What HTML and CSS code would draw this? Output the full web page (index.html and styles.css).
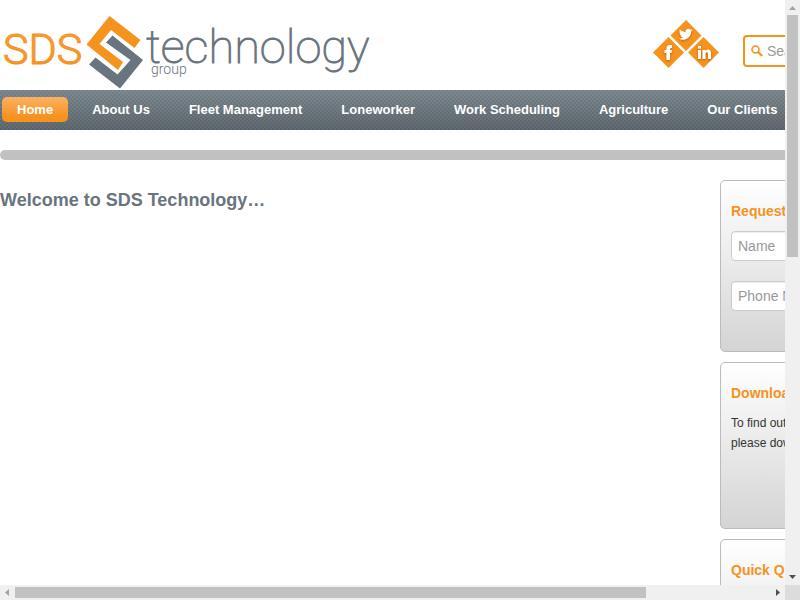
FILE: index.html
```html
<!DOCTYPE html>
<html lang="en">
<head>
<meta charset="utf-8">
<title>SDS Technology</title>
<link rel="stylesheet" href="styles.css">
</head>
<body>
<div class="view">
  <div class="page">
    <header class="header">
      <a class="logo" href="#">
        <svg class="logo-art" viewBox="0 0 380 90" role="img" aria-label="SDS technology group">
          <defs>
            <linearGradient id="sds" x1="0" y1="0" x2="0" y2="1">
              <stop offset="0" stop-color="#f9a23b"/>
              <stop offset="1" stop-color="#f6921e"/>
            </linearGradient>
          </defs>
          <text class="logo-sds" x="3" y="64" fill="url(#sds)">SDS</text>
          <path fill="#f6921e" d="M109.500 16 L140.500 40 L134.500 48 L111 30 L99.500 44 L123 62 L118 70 L86.500 44.500Z"/>
          <path fill="#6a747e" d="M112.500 35.500 L143 60 L120 88.500 L89 64.500 L95.500 57.500 L117.500 74.500 L130.500 60 L106 42.500Z"/>
          <text class="logo-tech" x="146" y="63">technology</text>
          <text class="logo-group" x="151" y="74">group</text>
        </svg>
      </a>
      <div class="social">
        <svg viewBox="0 0 66 50" width="66" height="50" role="img" aria-label="Social links">
          <defs>
            <filter id="shade" x="-30%" y="-30%" width="160%" height="170%">
              <feDropShadow dx="0" dy="1" stdDeviation="1" flood-color="#7a4300" flood-opacity=".6"/>
            </filter>
          </defs>
          <g fill="#f6921e">
            <path d="M33 0 L48.500 15.500 L33 31 L17.500 15.500Z"/>
            <path d="M15.500 17 L31 32.500 L15.500 48 L0 32.500Z"/>
            <path d="M50.500 17 L66 32.500 L50.500 48 L35 32.500Z"/>
          </g>
          <g fill="#fff" filter="url(#shade)">
            <path transform="translate(26 7.500) scale(.56)" d="M23.950 4.570a10 10 0 0 1-2.820.770 4.960 4.960 0 0 0 2.160-2.720c-.950.550-2 .950-3.130 1.180a4.920 4.920 0 0 0-8.380 4.480C7.690 8.090 4.070 6.130 1.640 3.160a4.930 4.930 0 0 0 1.520 6.570 4.900 4.900 0 0 1-2.230-.610v.060a4.920 4.920 0 0 0 3.950 4.830 5 5 0 0 1-2.210.080 4.940 4.940 0 0 0 4.600 3.420A9.870 9.870 0 0 1 0 19.540a14 14 0 0 0 7.550 2.210c9.050 0 14-7.500 14-13.990 0-.210 0-.420-.020-.630a9.940 9.940 0 0 0 2.420-2.560z"/>
            <path d="M13.500 40 V33 H11.500 V30 H13.500 V28.500 Q13.500 25 17 25 H19 V28 H18 Q17 28 17 29 V30 H19 L18.500 33 H17 V40Z"/>
            <path d="M45 30 H48 V39 H45Z M45 26 H48 V28.500 H45Z M49.500 30 H52.500 V31 Q53.500 29.500 55 29.500 Q58 29.500 58 33 V39 H55 V34 Q55 32 54 32 Q52.500 32 52.500 34 V39 H49.500Z"/>
          </g>
        </svg>
      </div>
      <form class="search">
        <svg class="search-icon" viewBox="0 0 12 12" width="12" height="12" aria-hidden="true">
          <circle cx="4.500" cy="4.500" r="3.500" fill="none" stroke="#f6921e" stroke-width="1.600"/>
          <path d="M7.500 7.500 L10.500 10.200" stroke="#f6921e" stroke-width="2.200" stroke-linecap="round"/>
        </svg>
        <input type="text" placeholder="Search" aria-label="Search">
      </form>
    </header>
    <nav class="nav">
      <a class="current" href="#">Home</a>
      <a href="#">About Us</a>
      <a href="#">Fleet Management</a>
      <a href="#">Loneworker</a>
      <a href="#">Work Scheduling</a>
      <a href="#">Agriculture</a>
      <a href="#">Our Clients</a>
    </nav>
    <div class="banner"></div>
    <div class="columns">
      <main class="main"><h1>Welcome to SDS Technology…</h1></main>
      <aside class="side">
        <form class="card request">
          <h2>Request</h2>
          <input type="text" placeholder="Name" aria-label="Name">
          <input type="text" placeholder="Phone Number" aria-label="Phone Number">
        </form>
        <section class="card download">
          <h2>Download</h2>
          <p>To find out<br>please download</p>
        </section>
        <section class="card"><h2>Quick Quote</h2></section>
      </aside>
    </div>
  </div>
</div>
<div class="bar bar-y" aria-hidden="true">
  <svg viewBox="0 0 15 15"><path fill="#a3a3a3" d="M4 10 L7.500 6 L11 10Z"/></svg>
  <div class="track"><div class="thumb"></div></div>
  <svg viewBox="0 0 15 15"><path fill="#505050" d="M4 5 L7.500 9 L11 5Z"/></svg>
</div>
<div class="bar bar-x" aria-hidden="true">
  <svg viewBox="0 0 15 15"><path fill="#a3a3a3" d="M9 4 L5 7.500 L9 11Z"/></svg>
  <div class="track"><div class="thumb"></div></div>
  <svg viewBox="0 0 15 15"><path fill="#505050" d="M6 4 L10 7.500 L6 11Z"/></svg>
</div>
<div class="corner"></div>
</body>
</html>
```
FILE: styles.css
```css
* { box-sizing: border-box; }

body {
  margin: 0;
  height: 100vh;
  display: grid;
  grid-template: minmax(0, 1fr) 15px / minmax(0, 1fr) 15px;
  overflow: hidden;
  background: #fff;
  color: #333;
  font: 12px/20px "Liberation Sans", Arial, sans-serif;
}

.view { overflow: hidden; }
.page { min-width: 940px; }

.header {
  display: flex;
  align-items: flex-start;
  height: 90px;
}
.logo { flex: 0 0 653px; }
.logo-art { display: block; width: 380px; height: 90px; }
.logo-sds { font: 300 43px Roboto, sans-serif; stroke: #f6921e; stroke-width: 1px; }
.logo-tech { font: 100 47px Roboto, sans-serif; fill: #6a747e; stroke: #6a747e; stroke-width: 1px; }
.logo-group { font: 300 14px Roboto, sans-serif; fill: #6a747e; }
.social { padding-top: 20px; width: 90px; }

.search {
  display: flex;
  align-items: center;
  gap: 4px;
  flex: 1;
  height: 32px;
  margin-top: 35px;
  padding: 0 6px;
  border: 2px solid #f6921e;
  border-radius: 4px;
}
.search-icon { flex: none; }
.search input {
  width: 100%;
  padding: 0;
  border: 0;
  outline: 0;
  background: none;
  font: 14px/20px "Liberation Sans", Arial, sans-serif;
}
input::placeholder { color: #999; opacity: 1; }

.nav {
  display: flex;
  align-items: center;
  gap: 9px;
  height: 40px;
  padding: 0 2px 2px;
  background:
    linear-gradient(rgba(255, 255, 255, .04), rgba(0, 0, 0, .2)),
    conic-gradient(rgba(50, 60, 70, .16) 25%, transparent 0 50%, rgba(50, 60, 70, .16) 0 75%, transparent 0) 0 0 / 4px 4px,
    #7a858d;
}
.nav a {
  padding: 0 15px;
  border-radius: 5px;
  color: #fff;
  font-size: 13px;
  font-weight: bold;
  line-height: 25px;
  text-decoration: none;
  white-space: nowrap;
}
.nav .current { background: linear-gradient(#fbb161, #f6921e 80%); }

.banner {
  height: 10px;
  margin: 20px 0;
  border-radius: 5px;
  background: #c1c1c1;
}

.columns { display: flex; }
.main { flex: 1; }
h1 {
  margin: 10px 0;
  color: #6a747e;
  font-size: 18px;
  line-height: 20px;
}
.side {
  display: flex;
  flex-direction: column;
  gap: 10px;
  width: 220px;
}
.card {
  min-height: 167px;
  padding: 20px 10px;
  border: 1px solid #bbb;
  border-radius: 5px;
  background: linear-gradient(#fff, #d4d4d4);
}
.request { min-height: 172px; }
.card h2 {
  margin: 0 0 10px;
  color: #f6921e;
  font-size: 14px;
  line-height: 20px;
}
.card p { margin: 0; }
.card input {
  display: block;
  width: 100%;
  height: 30px;
  margin-bottom: 20px;
  padding: 4px 6px;
  border: 1px solid #ccc;
  border-radius: 4px;
  background: #fff;
  box-shadow: inset 0 1px 1px rgba(0, 0, 0, .075);
  font: 14px/20px "Liberation Sans", Arial, sans-serif;
}
.request input:last-child { margin-bottom: 0; }

.bar { display: flex; background: #f0f0f0; }
.bar svg { flex: none; width: 15px; height: 15px; }
.bar-y { flex-direction: column; }
.track { flex: 1; display: flex; }
.bar-y .track { padding: 0 2px; }
.bar-x .track { padding: 2px 0; }
.thumb { background: #c1c1c1; }
.bar-y .thumb { width: 100%; height: 43.6%; }
.bar-x .thumb { width: 83.6%; }
.corner { background: #dcdcdc; }
```
